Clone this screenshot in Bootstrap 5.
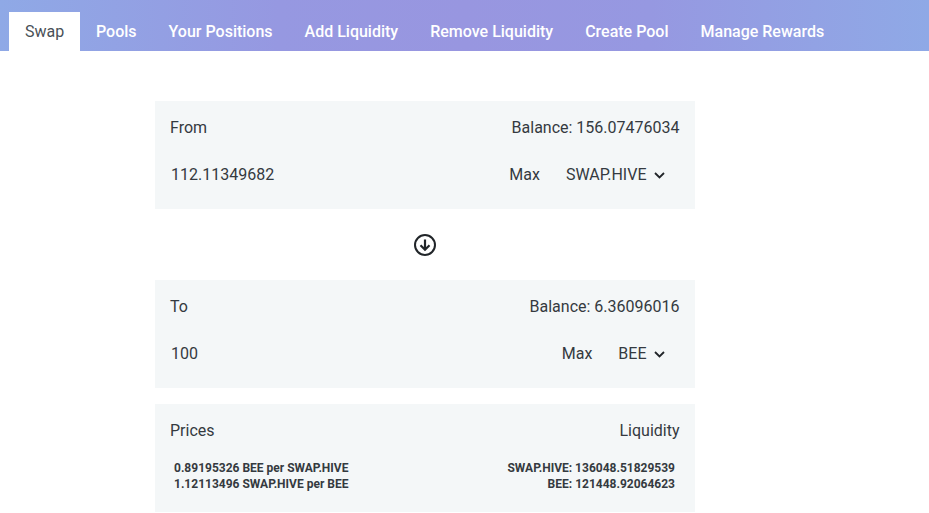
<!doctype html>
<html lang="en">
<head>
<meta charset="utf-8">
<title>Swap</title>
<link href="https://cdn.jsdelivr.net/npm/bootstrap@5.3.0/dist/css/bootstrap.min.css" rel="stylesheet">
<style>
body{font-family:Roboto,sans-serif;color:#212529;background:#fff;font-size:16px;overflow:hidden}
.top-tabs{height:51px;padding:12px 0 0 9px;background:linear-gradient(90deg,#8fa9e6 0%,#9698e1 30%,#9896e0 50%,#9698e1 70%,#8fa9e6 100%);border:0;flex-wrap:nowrap;gap:0}
.top-tabs .nav-link{height:39px;padding:9px 16px 8px;border:0;border-radius:0;color:#fff;font-weight:500;line-height:22px;margin:0;background:transparent;white-space:nowrap}
.top-tabs .nav-link.active{color:#495057;background:#fff;font-weight:400;width:71px}
.swap-wrap{width:540px;margin:50px 0 0 155px}
.swap-panel{background:#f4f7f8;height:108px;padding:15px 15.500px 0 15px;color:#343a40}
.panel-head{height:24px;line-height:24px}
.panel-input{height:24px;line-height:24px;margin-top:23px;padding-left:1px}
.pick{margin-left:26px;padding-right:15px;display:flex;align-items:center;gap:7px}
.swap-arrow{height:71px;display:flex;align-items:center;justify-content:center}
.panel-gap{margin-top:16px}
.rate-lines{font-size:12px;font-weight:700;line-height:16px;margin-top:17px;padding:0 4.500px 0 4px;color:#343a40}
</style>
</head>
<body>
<ul class="nav nav-tabs top-tabs">
<li class="nav-item"><a class="nav-link active" href="#">Swap</a></li>
<li class="nav-item"><a class="nav-link" href="#">Pools</a></li>
<li class="nav-item"><a class="nav-link" href="#">Your Positions</a></li>
<li class="nav-item"><a class="nav-link" href="#">Add Liquidity</a></li>
<li class="nav-item"><a class="nav-link" href="#">Remove Liquidity</a></li>
<li class="nav-item"><a class="nav-link" href="#">Create Pool</a></li>
<li class="nav-item"><a class="nav-link" href="#">Manage Rewards</a></li>
</ul>
<main class="swap-wrap">
<section class="swap-panel">
<div class="panel-head d-flex justify-content-between"><span>From</span><span>Balance: 156.07476034</span></div>
<div class="panel-input d-flex justify-content-between"><span>112.11349682</span><div class="d-flex"><span>Max</span><span class="pick">SWAP.HIVE <svg width="11" height="7" viewBox="0 0 11 7" fill="none" stroke="#212529" stroke-width="1.800"><path d="M1 1l4.500 4.500L10 1"/></svg></span></div></div>
</section>
<div class="swap-arrow"><svg width="24" height="24" viewBox="0 0 24 24" fill="none" stroke="#212529" stroke-width="2"><circle cx="12" cy="12" r="10"/><path d="M12 6.500v10M7.500 12.300L12 16.800l4.500-4.500" stroke-width="2.200"/></svg></div>
<section class="swap-panel">
<div class="panel-head d-flex justify-content-between"><span>To</span><span>Balance: 6.36096016</span></div>
<div class="panel-input d-flex justify-content-between"><span>100</span><div class="d-flex"><span>Max</span><span class="pick">BEE <svg width="11" height="7" viewBox="0 0 11 7" fill="none" stroke="#212529" stroke-width="1.800"><path d="M1 1l4.500 4.500L10 1"/></svg></span></div></div>
</section>
<section class="swap-panel panel-gap">
<div class="panel-head d-flex justify-content-between"><span>Prices</span><span>Liquidity</span></div>
<div class="rate-lines d-flex justify-content-between"><div>0.89195326 BEE per SWAP.HIVE<br>1.12113496 SWAP.HIVE per BEE</div><div class="text-end">SWAP.HIVE: 136048.51829539<br>BEE: 121448.92064623</div></div>
</section>
</main>
<script src="https://cdn.jsdelivr.net/npm/bootstrap@5.3.0/dist/js/bootstrap.bundle.min.js"></script>
</body>
</html>
